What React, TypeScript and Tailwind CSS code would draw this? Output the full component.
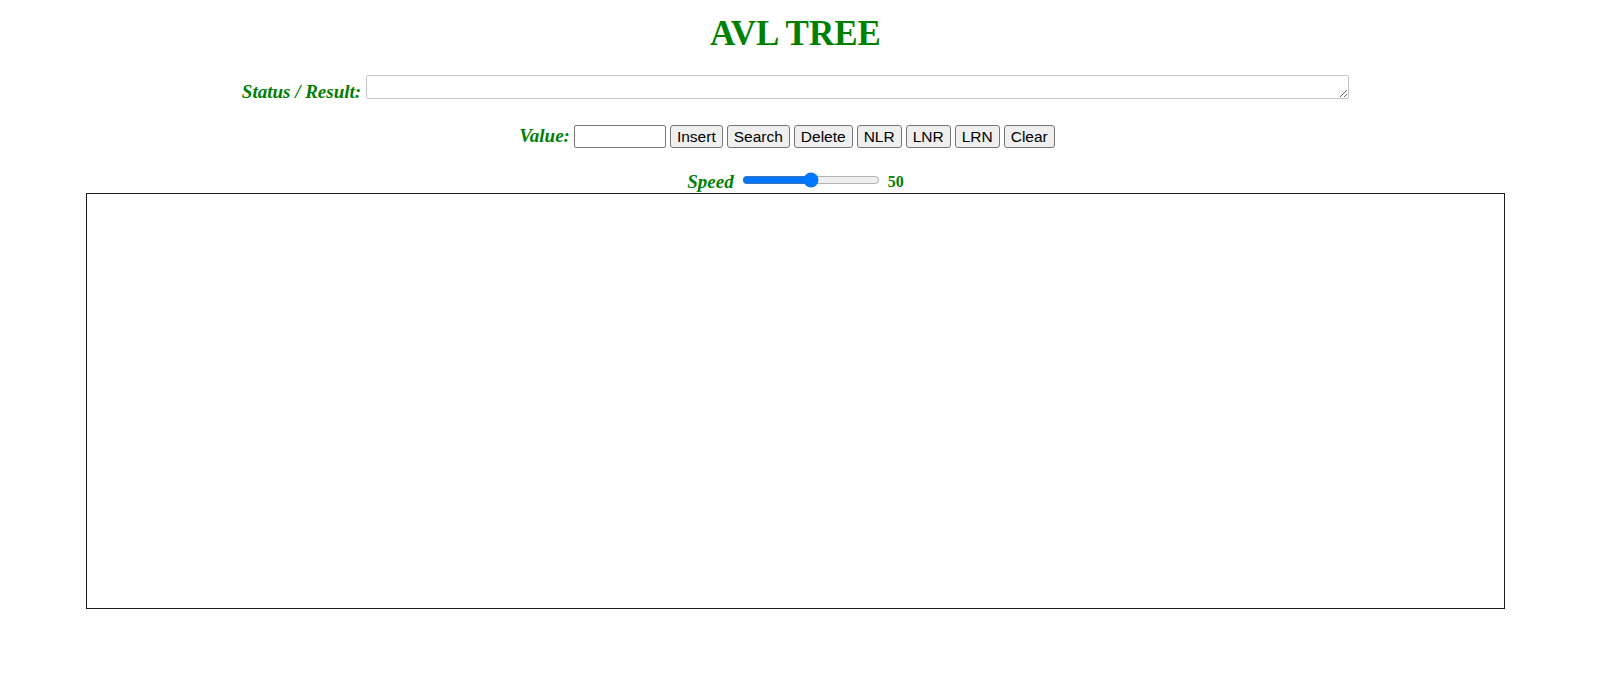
import React from "react";

const serif = { fontFamily: '"Liberation Serif", "Times New Roman", serif' };

export default function App() {
  const btn =
    "h-[23px] px-[6px] border border-[#767676] rounded-[3px] bg-[#efefef] text-black text-[15.5px] leading-[19px] font-['Liberation_Sans',Arial,sans-serif]";
  const label = "text-[#008000] font-bold italic text-[19px] leading-[19px] font-['Liberation_Serif','Times_New_Roman',serif]";
  return (
    <div className="w-[1598px] h-[684px] bg-white overflow-hidden" style={serif}>
      <div className="w-[1591px] flex flex-col items-center">
        <h1 className="mt-[14px] h-[40px] text-[35px] leading-[40px] font-bold text-[#008000] font-['Liberation_Serif','Times_New_Roman',serif]">
          AVL TREE
        </h1>

        <div className="mt-[21px] flex items-end gap-[5px]">
          <span className={label + " mb-[-2px]"}>Status / Result:</span>
          <textarea
            rows={1}
            readOnly
            className="block w-[983px] h-[24px] border border-[#c4c4cc] rounded-[2px] bg-white resize"
          />
        </div>

        <div className="mt-[26px] flex items-baseline gap-[4px] pr-[17px]">
          <span className={label}>Value:</span>
          <input
            type="text"
            className="w-[92px] h-[23px] border border-[#767676] rounded-[2px] bg-white px-[2px] text-[15px] font-['Liberation_Sans',Arial,sans-serif]"
          />
          <button className={btn}>Insert</button>
          <button className={btn}>Search</button>
          <button className={btn}>Delete</button>
          <button className={btn}>NLR</button>
          <button className={btn}>LNR</button>
          <button className={btn}>LRN</button>
          <button className={btn}>Clear</button>
        </div>

        <div className="mt-[20px] h-[24px] flex items-center gap-[8px]">
          <span className={label + " pt-[3px]"}>Speed</span>
          <input
            type="range"
            min={0}
            max={100}
            defaultValue={50}
            className="m-0 w-[138px] h-[16px] accent-[#0075ff]"
          />
          <span className="pt-[3px] text-[#008000] font-bold text-[16px] leading-[19px] font-['Liberation_Serif','Times_New_Roman',serif]">
            50
          </span>
        </div>

        <div className="mt-[1px] w-[1419px] h-[416px] border border-[#1a1a1a] bg-white" />
      </div>
    </div>
  );
}
